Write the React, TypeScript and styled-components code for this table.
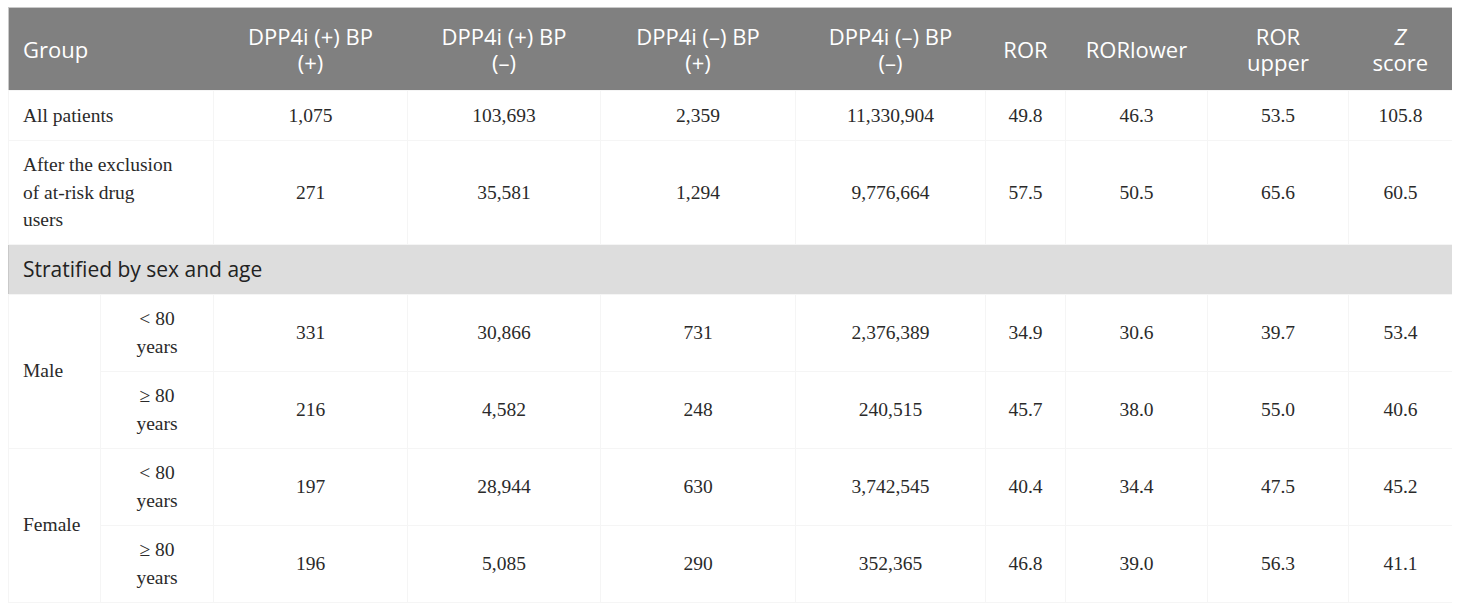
import React from "react";
import styled, { createGlobalStyle } from "styled-components";

const GlobalStyle = createGlobalStyle`
  html, body { background: #ffffff; }
  body {
    margin: 7px 8px 8px;
    font-family: "Liberation Serif", "Times New Roman", serif;
  }
`;

const Table = styled.table`
  width: 100%;
  table-layout: fixed;
  border-collapse: collapse;
  border: 1px solid #c9c9c9;
`;

const HeadRow = styled.tr`
  background: #808080;
`;

const HeadCell = styled.th<{ $align?: "left" | "center" }>`
  padding: 15px 14px;
  font-family: "Open Sans", "Noto Sans", sans-serif;
  font-weight: 400;
  font-size: 22px;
  line-height: 26px;
  color: #ffffff;
  text-align: ${(p) => p.$align ?? "center"};
  vertical-align: middle;
`;

const BodyRow = styled.tr`
  background: #ffffff;
`;

const Cell = styled.td<{ $align?: "left" | "center" }>`
  padding: 10.6px 14px;
  font-family: "Liberation Serif", "Times New Roman", serif;
  font-size: 19.5px;
  line-height: 27.4px;
  color: #2a2a2a;
  text-align: ${(p) => p.$align ?? "center"};
  vertical-align: middle;
  border: 1px solid #f5f5f5;
  white-space: pre-line;
`;

const SectionRow = styled.tr`
  background: #dddddd;
`;

const SectionCell = styled.td`
  padding: 10.6px 14px;
  font-family: "Open Sans", "Noto Sans", sans-serif;
  font-size: 21px;
  line-height: 27.4px;
  color: #222222;
  text-align: left;
  vertical-align: middle;
`;

const colWidths = [92, 113, 194, 193, 195, 190, 80, 142, 141, 104];

type Row = { label: string; vals: string[] };

const topRows: Row[] = [
  {
    label: "All patients",
    vals: ["1,075", "103,693", "2,359", "11,330,904", "49.8", "46.3", "53.5", "105.8"],
  },
  {
    label: "After the exclusion\nof at-risk drug\nusers",
    vals: ["271", "35,581", "1,294", "9,776,664", "57.5", "50.5", "65.6", "60.5"],
  },
];

type Group = { sex: string; ages: { age: string; vals: string[] }[] };

const groups: Group[] = [
  {
    sex: "Male",
    ages: [
      { age: "<\u00a080\nyears", vals: ["331", "30,866", "731", "2,376,389", "34.9", "30.6", "39.7", "53.4"] },
      { age: "\u2265\u00a080\nyears", vals: ["216", "4,582", "248", "240,515", "45.7", "38.0", "55.0", "40.6"] },
    ],
  },
  {
    sex: "Female",
    ages: [
      { age: "<\u00a080\nyears", vals: ["197", "28,944", "630", "3,742,545", "40.4", "34.4", "47.5", "45.2"] },
      { age: "\u2265\u00a080\nyears", vals: ["196", "5,085", "290", "352,365", "46.8", "39.0", "56.3", "41.1"] },
    ],
  },
];

export default function App() {
  return (
    <>
      <GlobalStyle />
      <Table>
        <colgroup>
          {colWidths.map((w, i) => (
            <col key={i} style={{ width: w }} />
          ))}
        </colgroup>
        <thead>
          <HeadRow>
            <HeadCell colSpan={2} $align="left">
              Group
            </HeadCell>
            <HeadCell>
              DPP4i (+) BP
              <br />
              (+)
            </HeadCell>
            <HeadCell>
              DPP4i (+) BP
              <br />
              (–)
            </HeadCell>
            <HeadCell>
              DPP4i (–) BP
              <br />
              (+)
            </HeadCell>
            <HeadCell>
              DPP4i (–) BP
              <br />
              (–)
            </HeadCell>
            <HeadCell>ROR</HeadCell>
            <HeadCell>RORlower</HeadCell>
            <HeadCell>
              ROR
              <br />
              upper
            </HeadCell>
            <HeadCell>
              <i>Z</i>
              <br />
              score
            </HeadCell>
          </HeadRow>
        </thead>
        <tbody>
          {topRows.map((r) => (
            <BodyRow key={r.label}>
              <Cell colSpan={2} $align="left">
                {r.label}
              </Cell>
              {r.vals.map((v, i) => (
                <Cell key={i}>{v}</Cell>
              ))}
            </BodyRow>
          ))}
          <SectionRow>
            <SectionCell colSpan={10}>Stratified by sex and age</SectionCell>
          </SectionRow>
          {groups.map((g) =>
            g.ages.map((a, ai) => (
              <BodyRow key={g.sex + ai}>
                {ai === 0 && (
                  <Cell rowSpan={g.ages.length} $align="left">
                    {g.sex}
                  </Cell>
                )}
                <Cell>{a.age}</Cell>
                {a.vals.map((v, i) => (
                  <Cell key={i}>{v}</Cell>
                ))}
              </BodyRow>
            ))
          )}
        </tbody>
      </Table>
    </>
  );
}
